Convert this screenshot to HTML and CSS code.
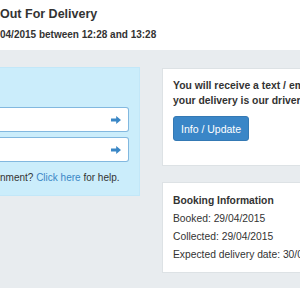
FILE: index.html
```
<!DOCTYPE html>
<html lang="en">
<head>
	<meta charset="UTF-8">
	<meta name="viewport" content="width=device-width, initial-scale=1.0">
	<title>Tracking</title>
	<link rel="stylesheet" href="styles.css">
</head>
<body>
	<div class="header">  <!-- 状态标题 -->
		<h1 class="status">Out For Delivery</h1>
		<p class="window">04/2015 between 12:28 and 13:28</p>
	</div>

	<div class="main">
		<div class="left">
			<div class="lookup">
				<div class="field"><span class="go"><svg viewBox="0 0 10 8"><path d="M0 2.6h5.2V0L10 4 5.2 8V5.4H0z"/></svg></span></div>
				<div class="field"><span class="go"><svg viewBox="0 0 10 8"><path d="M0 2.6h5.2V0L10 4 5.2 8V5.4H0z"/></svg></span></div>
				<p class="help">nment? <a href="#">Click here</a> for help.</p>
			</div>
		</div>

		<div class="right">
			<div class="card notice">
				<p class="strong">You will receive a text / email when<br>your delivery is our driver's next stop.</p>
				<button class="btn">Info / Update</button>
			</div>
			<div class="card booking">
				<p class="strong">Booking Information</p>
				<p>Booked: 29/04/2015</p>
				<p>Collected: 29/04/2015</p>
				<p>Expected delivery date: 30/04/2015</p>
			</div>
		</div>
	</div>
</body>
</html>
```
FILE: styles.css
```
html {
    overflow: hidden;
}
body {
    font-family: "Liberation Sans", Arial, sans-serif;
    margin: 0;
    padding: 0;
    background-color: #fff;
    color: #333;
    width: 300px;
}
p {
    margin: 0;
}
.header {     /* 顶部白色区域 */
    height: 50px;
    box-sizing: border-box;
    padding-top: 7px;
}
.status {
    margin: 0;
    font-size: 12.5px;
    line-height: 15px;
    font-weight: bold;
}
.window {
    margin-top: 7px;
    font-size: 10px;
    line-height: 12px;
    font-weight: bold;
}
.main {       /* 灰色背景 */
    background-color: #e8ecef;
    display: flex;
    gap: 22px;
    padding: 17px 0 15px 0;
}
.left {
    flex: 0 0 140px;
}
.lookup {     /* 浅蓝色提示框 */
    background-color: #cbedfb;
    border: 1px solid #c2e7f8;
    border-left: none;
    padding: 39px 10px 10px 0;
}
.field {
    height: 25px;
    box-sizing: border-box;
    background-color: #fff;
    border: 1px solid #82b8df;
    border-left: none;
    border-radius: 0 3px 3px 0;
    margin-bottom: 5px;
    display: flex;
    align-items: center;
    justify-content: flex-end;
    padding-right: 7px;
}
.go svg {
    display: block;
    width: 10px;
    height: 8px;
    fill: #3a87c6;
}
.help {
    margin-top: 9px;
    font-size: 10px;
    line-height: 14px;
    white-space: nowrap;
}
.help a {
    color: #3a87c6;
    text-decoration: none;
}
.right {
    flex: 0 0 200px;
    display: flex;
    flex-direction: column;
    gap: 16px;
    padding-top: 1px;
}
.card {       /* 白色卡片 */
    background-color: #fff;
    border: 1px solid #dde2e5;
    padding: 10px 10px 24px 10px;
    white-space: nowrap;
}
.notice .strong {
    font-size: 10.4px;
    line-height: 14.5px;
    font-weight: bold;
}
.btn {
    margin-top: 8px;
    height: 25px;
    padding: 0 7px;
    font-family: inherit;
    font-size: 10.5px;
    color: #fff;
    background-color: #3a86c7;
    border: 1px solid #3479b4;
    border-radius: 3px;
}
.booking {
    padding: 9px 10px 8px 10px;
}
.booking p {
    font-size: 10.3px;
    line-height: 18px;
}
.booking .strong {
    font-weight: bold;
}
```
